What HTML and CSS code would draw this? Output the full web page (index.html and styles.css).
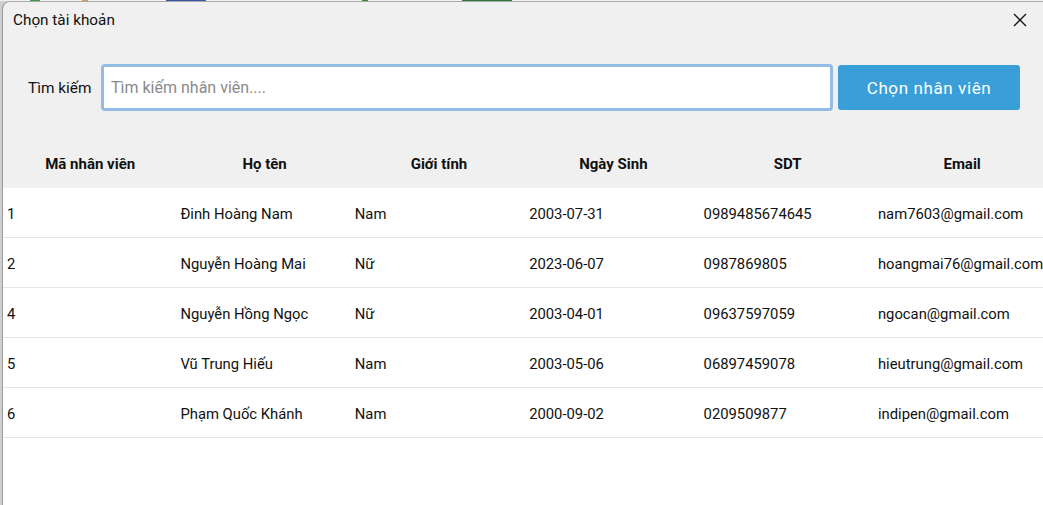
FILE: index.html
```html
<!DOCTYPE html>
<html lang="vi">
<head>
<meta charset="utf-8">
<title>Chọn tài khoản</title>
<link rel="stylesheet" href="styles.css">
</head>
<body>
<div class="desk"></div>
<div class="window">
  <div class="titlebar">
    <span class="title">Chọn tài khoản</span>
    <svg class="close" width="14" height="14" viewBox="0 0 14 14"><path d="M1 1L13 13M13 1L1 13" stroke="#111" stroke-width="1.3" fill="none"/></svg>
  </div>
  <div class="search">
    <label class="search-label" for="q">Tìm kiếm</label>
    <input id="q" class="search-input" type="text" placeholder="Tìm kiếm nhân viên....">
    <button class="pick-btn">Chọn nhân viên</button>
  </div>
  <div class="grid-area">
    <div class="grid">
      <div class="hd">Mã nhân viên</div><div class="hd">Họ tên</div><div class="hd">Giới tính</div><div class="hd">Ngày Sinh</div><div class="hd">SDT</div><div class="hd">Email</div>
      <div class="cell c1">1</div><div class="cell">Đinh Hoàng Nam</div><div class="cell">Nam</div><div class="cell">2003-07-31</div><div class="cell">0989485674645</div><div class="cell">nam7603@gmail.com</div>
      <div class="cell c1">2</div><div class="cell">Nguyễn Hoàng Mai</div><div class="cell">Nữ</div><div class="cell">2023-06-07</div><div class="cell">0987869805</div><div class="cell">hoangmai76@gmail.com</div>
      <div class="cell c1">4</div><div class="cell">Nguyễn Hồng Ngọc</div><div class="cell">Nữ</div><div class="cell">2003-04-01</div><div class="cell">09637597059</div><div class="cell">ngocan@gmail.com</div>
      <div class="cell c1">5</div><div class="cell">Vũ Trung Hiếu</div><div class="cell">Nam</div><div class="cell">2003-05-06</div><div class="cell">06897459078</div><div class="cell">hieutrung@gmail.com</div>
      <div class="cell c1">6</div><div class="cell">Phạm Quốc Khánh</div><div class="cell">Nam</div><div class="cell">2000-09-02</div><div class="cell">0209509877</div><div class="cell">indipen@gmail.com</div>
    </div>
  </div>
</div>
</body>
</html>
```

FILE: styles.css
```css
html, body {
  margin: 0;
  padding: 0;
  height: 100%;
  overflow: hidden;
}
body {
  background: #cfcfcf;
  font-family: Roboto, "Noto Sans", "Liberation Sans", sans-serif;
  color: #111;
  display: flex;
  flex-direction: column;
}
.desk {
  height: 1px;
  flex: none;
  background: linear-gradient(to right,
    #f3f3f3 0, #f3f3f3 30px, #3c9a4c 30px, #3c9a4c 40px, #f3f3f3 40px,
    #f3f3f3 82px, #d49a5a 82px, #d49a5a 88px, #f3f3f3 88px,
    #f3f3f3 166px, #3a55a6 166px, #3a55a6 206px, #f3f3f3 206px,
    #f3f3f3 362px, #2f8a44 362px, #2f8a44 368px, #f3f3f3 368px,
    #f3f3f3 462px, #2a7a3c 462px, #2a7a3c 512px, #f3f3f3 512px);
}
.window {
  flex: 1;
  margin-left: 2px;
  border-left: 1px solid #9a9a9a;
  border-top: 1px solid #a8a8a8;
  border-top-left-radius: 8px;
  background: #f0f0f0;
  display: flex;
  flex-direction: column;
  overflow: hidden;
}
.titlebar {
  height: 35px;
  flex: none;
  display: flex;
  align-items: center;
  justify-content: space-between;
  padding: 0 16px 0 10px;
}
.title {
  font-size: 15.3px;
  color: #111;
}
.close {
  display: block;
}
.search {
  margin-top: 27px;
  height: 47px;
  flex: none;
  display: flex;
  align-items: center;
  padding-left: 25px;
}
.search-label {
  font-size: 15.4px;
  color: #111;
  width: 73px;
}
.search-input {
  box-sizing: border-box;
  width: 732px;
  height: 47px;
  border: 3px solid #93bbe3;
  border-radius: 4px;
  background: #fff;
  padding: 0 7px;
  font-family: inherit;
  font-size: 16px;
  color: #111;
  outline: none;
}
.search-input::placeholder {
  color: #8a8a8a;
}
.pick-btn {
  margin-left: 5px;
  width: 182px;
  height: 45px;
  border: none;
  border-radius: 3px;
  background: #3a9fd8;
  color: #fff;
  font-family: inherit;
  font-size: 17px;
  letter-spacing: 0.6px;
}
.grid-area {
  margin-top: 28px;
  flex: 1;
  background: #fff;
}
.grid {
  display: grid;
  grid-template-columns: repeat(6, 174.4px);
}
.hd {
  height: 48px;
  padding-top: 1px;
  background: #f0f0f0;
  display: flex;
  align-items: center;
  justify-content: center;
  font-weight: bold;
  font-size: 15px;
  color: #111;
}
.cell {
  height: 46px;
  padding-top: 3px;
  border-bottom: 1px solid #e6e6e6;
  display: flex;
  align-items: center;
  padding-left: 3px;
  font-size: 14.8px;
  color: #111;
  white-space: nowrap;
}
.c1 {
  padding-left: 4px;
}
```
